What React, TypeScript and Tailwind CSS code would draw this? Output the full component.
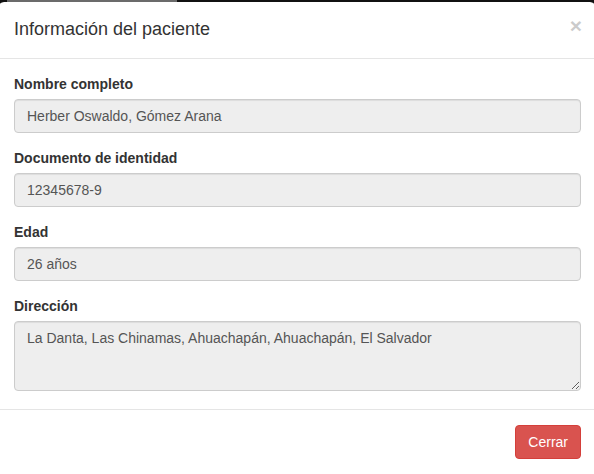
import React from "react";

const fields = [
  { label: "Nombre completo", value: "Herber Oswaldo, Gómez Arana" },
  { label: "Documento de identidad", value: "12345678-9" },
  { label: "Edad", value: "26 años" },
];

const App = () => {
  return (
    <div
      className="h-[474px] w-[594px] overflow-hidden bg-[#111] text-[#333]"
      style={{ fontFamily: '"Liberation Sans", Arial, sans-serif' }}
    >
      {/* navbar behind the backdrop */}
      <div className="flex h-[2px] overflow-hidden">
        <div className="ml-[7px] -mt-[20px] h-[22px] w-[170px] shrink-0 bg-[#6b6b6b] pl-[12px] text-[14px] leading-[20px] text-[#2a2a2a]">
          Search
        </div>
      </div>

      <div className="-ml-[2px] w-[598px] rounded-t-[6px] border border-t-0 border-[#999]/40 bg-white">
        {/* Header */}
        <div className="flex items-start justify-between border-b border-[#e5e5e5] p-[15px]">
          <h4 className="text-[18px] leading-[25.7px] text-[#333]">Información del paciente</h4>
          <button className="-mt-[2px] -mr-[2px] text-[21px] font-bold leading-none text-black opacity-20">
            ×
          </button>
        </div>

        {/* Body */}
        <div className="p-[15px] pr-[14px]">
          {fields.map((field, index) => (
            <div key={index} className="mb-[15px]">
              <label className="mb-[5px] block text-[14px] font-bold leading-[20px]">{field.label}</label>
              <input
                readOnly
                value={field.value}
                className="block h-[34px] w-full rounded-[4px] border border-[#ccc] bg-[#eee] px-[12px] py-[6px] text-[14px] leading-[20px] text-[#555] shadow-[inset_0_1px_1px_rgba(0,0,0,0.075)] outline-none"
              />
            </div>
          ))}
          <div className="mb-[3px]">
            <label className="mb-[5px] block text-[14px] font-bold leading-[20px]">Dirección</label>
            <textarea
              readOnly
              rows={3}
              value="La Danta, Las Chinamas, Ahuachapán, Ahuachapán, El Salvador"
              className="block h-[70px] w-full rounded-[4px] border border-[#ccc] bg-[#eee] px-[12px] py-[6px] text-[14px] leading-[20px] text-[#555] shadow-[inset_0_1px_1px_rgba(0,0,0,0.075)] outline-none"
            />
          </div>
        </div>

        {/* Footer */}
        <div className="flex justify-end border-t border-[#e5e5e5] p-[15px] pr-[14px]">
          <button className="h-[34px] rounded-[4px] border border-[#d43f3a] bg-[#d9534f] px-[12px] text-[14px] leading-[20px] text-white">
            Cerrar
          </button>
        </div>
      </div>
    </div>
  );
};

export default App;
